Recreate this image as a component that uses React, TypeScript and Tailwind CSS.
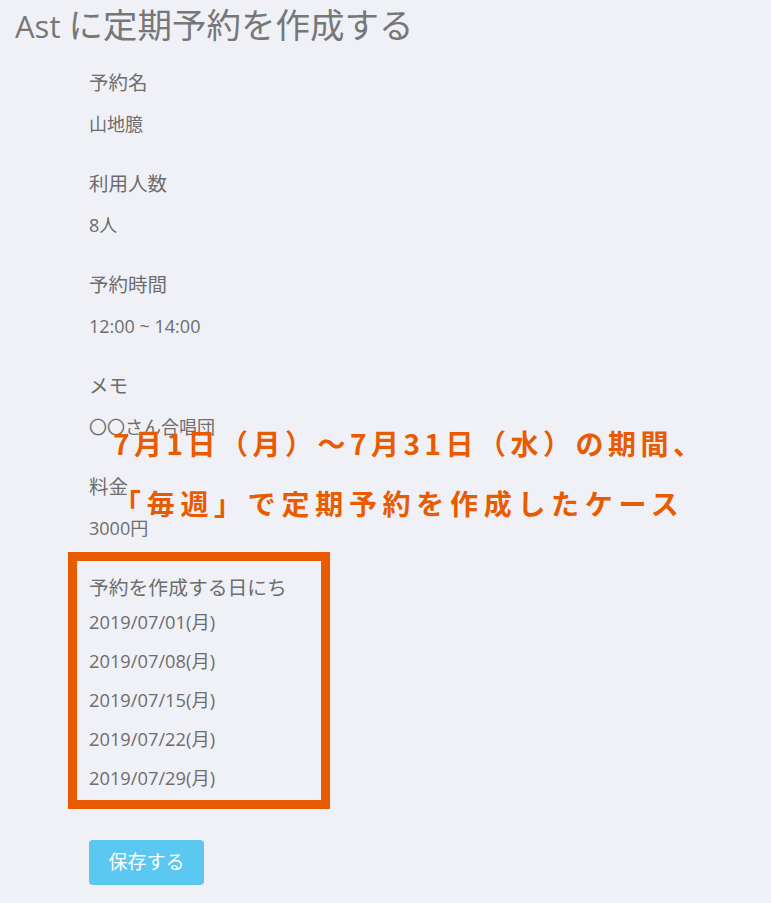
import type { ReactNode } from 'react'

const FONT = '"Open Sans", "Noto Sans CJK JP", sans-serif'

const fields = [
  { label: '予約名', value: '山地臆' },
  { label: '利用人数', value: '8人' },
  { label: '予約時間', value: '12:00 ~ 14:00' },
  { label: 'メモ', value: '〇〇さん合唱団' },
  { label: '料金', value: '3000円' },
]

const dates = [
  '2019/07/01(月)',
  '2019/07/08(月)',
  '2019/07/15(月)',
  '2019/07/22(月)',
  '2019/07/29(月)',
]

function Line({ children, className = 'text-[18px]' }: { children: ReactNode; className?: string }) {
  return <div className={`h-6 leading-6 text-[#6d6d6d] ${className}`}>{children}</div>
}

export default function App() {
  return (
    <div
      className="relative min-h-[903px] w-full overflow-hidden bg-[#f0f1f7]"
      style={{ fontFamily: FONT }}
    >
      {/* Title */}
      <h1 className="h-[50px] pl-[15px] text-[31px] leading-[50px] text-[#777777]">
        Ast <span className="text-[34.5px]">に定期予約を作成する</span>
      </h1>

      {/* Form details */}
      <div className="flex flex-col pl-[89px] pt-[21px]">
        <div className="flex flex-col gap-[36px]">
          {fields.map((f) => (
            <div key={f.label} className="flex flex-col gap-[17px]">
              <Line className="text-[19.5px]">{f.label}</Line>
              <Line>{f.value}</Line>
            </div>
          ))}
        </div>

        {/* Highlighted dates */}
        <div className="-ml-[21px] mt-[12px] flex w-[262px] flex-col border-[9px] border-[#e95b00] pb-[10px] pl-[12px] pt-[15px]">
          <Line className="text-[19.8px]">予約を作成する日にち</Line>
          <div className="mt-[10px] flex flex-col gap-[15px]">
            {dates.map((d) => (
              <Line key={d} className="text-[18.3px]">{d}</Line>
            ))}
          </div>
        </div>

        <button className="mt-[31px] h-[45px] w-[115px] rounded-[4px] bg-[#5bc8f1] text-[19px] text-white">
          保存する
        </button>
      </div>

      {/* Annotation overlay */}
      <div
        className="absolute left-[113px] top-[414px] flex flex-col gap-[2px] text-[28px] font-bold leading-[58px] text-[#e95b00]"
        style={{ fontFamily: '"Noto Sans CJK JP", sans-serif' }}
      >
        <div className="tracking-[4.5px]">7月1日（月）～7月31日（水）の期間、</div>
        <div className="tracking-[5.7px]">「毎週」で定期予約を作成したケース</div>
      </div>
    </div>
  )
}
